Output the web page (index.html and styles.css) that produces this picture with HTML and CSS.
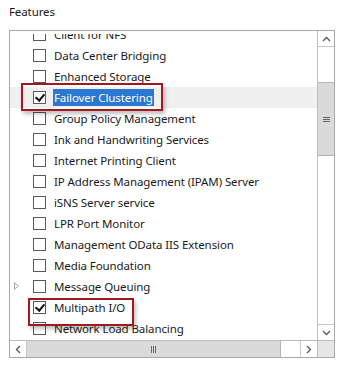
FILE: index.html
```html
<!DOCTYPE html>
<html lang="en">
<head>
  <meta charset="UTF-8">
  <title>Features</title>
  <link rel="stylesheet" href="styles.css">
</head>
<body>
  <div class="panel">
    <div class="panel-title">Features</div>

    <div class="listbox">
      <div class="list-view">
        <div class="viewport">
          <ul class="feature-list">
            <li class="item"><span class="box"></span><span class="label">Client for NFS</span></li>
            <li class="item"><span class="box"></span><span class="label">Data Center Bridging</span></li>
            <li class="item"><span class="box"></span><span class="label">Enhanced Storage</span></li>
            <li class="item current"><span class="box checked"></span><span class="label selected">Failover Clustering</span></li>
            <li class="item"><span class="box"></span><span class="label">Group Policy Management</span></li>
            <li class="item"><span class="box"></span><span class="label">Ink and Handwriting Services</span></li>
            <li class="item"><span class="box"></span><span class="label">Internet Printing Client</span></li>
            <li class="item"><span class="box"></span><span class="label">IP Address Management (IPAM) Server</span></li>
            <li class="item"><span class="box"></span><span class="label">iSNS Server service</span></li>
            <li class="item"><span class="box"></span><span class="label">LPR Port Monitor</span></li>
            <li class="item"><span class="box"></span><span class="label">Management OData IIS Extension</span></li>
            <li class="item"><span class="box"></span><span class="label">Media Foundation</span></li>
            <li class="item"><span class="expander"></span><span class="box"></span><span class="label">Message Queuing</span></li>
            <li class="item"><span class="box checked"></span><span class="label">Multipath I/O</span></li>
            <li class="item"><span class="box"></span><span class="label">Network Load Balancing</span></li>
          </ul>
        </div>

        <!-- annotation boxes drawn over the list -->
        <div class="mark mark-failover"></div>
        <div class="mark mark-multipath"></div>
      </div>

      <div class="vscroll">
        <div class="arrow">
          <svg width="9" height="6" viewBox="0 0 9 6"><path d="M1 5 L4.5 1.5 L8 5" fill="none" stroke="#555" stroke-width="1.3"/></svg>
        </div>
        <div class="track"></div>
        <div class="thumb">
          <span class="grip-h"></span><span class="grip-h"></span><span class="grip-h"></span>
        </div>
        <div class="track grow"></div>
        <div class="arrow">
          <svg width="9" height="6" viewBox="0 0 9 6"><path d="M1 1 L4.5 4.5 L8 1" fill="none" stroke="#555" stroke-width="1.3"/></svg>
        </div>
      </div>

      <div class="hscroll">
        <div class="arrow">
          <svg width="6" height="9" viewBox="0 0 6 9"><path d="M5 1 L1.5 4.5 L5 8" fill="none" stroke="#555" stroke-width="1.3"/></svg>
        </div>
        <div class="thumb">
          <span class="grip-v"></span><span class="grip-v"></span><span class="grip-v"></span>
        </div>
        <div class="track"></div>
        <div class="arrow">
          <svg width="6" height="9" viewBox="0 0 6 9"><path d="M1 1 L4.5 4.5 L1 8" fill="none" stroke="#555" stroke-width="1.3"/></svg>
        </div>
      </div>

      <div class="corner"></div>
    </div>
  </div>
</body>
</html>
```

FILE: styles.css
```css
/* General Styles */
body {
  margin: 0;
  background: #ffffff;
  font-family: 'Noto Sans', 'Open Sans', sans-serif;
  font-size: 11.5px;
  letter-spacing: -0.1px;
  color: #1a1a1a;
}

.panel {
  padding: 4px 16px 10px 9px;
}

.panel-title {
  height: 26px;
  line-height: 16px;
}

/* list box with scroll bars */
.listbox {
  display: grid;
  grid-template-columns: 1fr 17px;
  grid-template-rows: 309px 17px;
  border: 1px solid #a9a9a9;
  width: 324px;
}

.list-view {
  position: relative;
  background: #fff;
  padding-top: 3px;
  overflow: hidden;
}

.viewport {
  height: 306px;
  overflow: hidden;
}

.feature-list {
  list-style: none;
  margin: -10px 0 0 0;
  padding: 0;
}

.item {
  position: relative;
  display: flex;
  align-items: center;
  height: 21px;
  padding-left: 23px;
  white-space: nowrap;
}

.item.current {
  background: #f0f0f0;
}

.box {
  width: 11px;
  height: 11px;
  border: 1px solid #5a5a5a;
  background: #fff;
  margin-right: 7px;
  position: relative;
  flex: none;
}

.box.checked::after {
  content: "";
  position: absolute;
  left: 3px;
  top: 0px;
  width: 4px;
  height: 7px;
  border-right: 2px solid #111;
  border-bottom: 2px solid #111;
  transform: rotate(40deg);
}

.label {
  line-height: 17px;
  padding: 0 1px;
}

.label.selected {
  background: #2b78d3;
  color: #fff;
}

.expander {
  position: absolute;
  left: 4px;
  top: 6px;
  width: 0;
  height: 0;
  border-top: 4px solid transparent;
  border-bottom: 4px solid transparent;
  border-left: 5px solid #a6a6a6;
}

.expander::after {
  content: "";
  position: absolute;
  left: -4px;
  top: -2px;
  border-top: 2px solid transparent;
  border-bottom: 2px solid transparent;
  border-left: 3px solid #fff;
}

/* red annotation frames */
.mark {
  position: absolute;
  border: 2px solid #a3181f;
  box-shadow: 2px 3px 4px rgba(0, 0, 0, 0.25);
}

.mark-failover {
  left: 11px;
  top: 52px;
  width: 138px;
  height: 24px;
}

.mark-multipath {
  left: 18px;
  top: 267px;
  width: 102px;
  height: 24px;
}

/* scroll bars */
.vscroll {
  display: flex;
  flex-direction: column;
  border-left: 1px solid #bdbdbd;
  background: #fff;
}

.vscroll .arrow {
  height: 15px;
  display: flex;
  align-items: center;
  justify-content: center;
}

.vscroll .arrow:first-child {
  border-bottom: 1px solid #c8c8c8;
}

.vscroll .arrow:last-child {
  border-top: 1px solid #c8c8c8;
}

.vscroll .track {
  height: 35px;
}

.vscroll .track.grow {
  flex: 1;
  height: auto;
}

.vscroll .thumb {
  height: 72px;
  background: #dadada;
  border-top: 1px solid #b5b5b5;
  border-bottom: 1px solid #b5b5b5;
  display: flex;
  flex-direction: column;
  align-items: center;
  justify-content: center;
  gap: 1px;
}

.grip-h {
  width: 7px;
  height: 1px;
  background: #666;
}

.hscroll {
  display: flex;
  border-top: 1px solid #bdbdbd;
  background: #fff;
}

.hscroll .arrow {
  width: 16px;
  display: flex;
  align-items: center;
  justify-content: center;
}

.hscroll .arrow:first-child {
  border-right: 1px solid #c8c8c8;
}

.hscroll .arrow:last-child {
  border-left: 1px solid #c8c8c8;
}

.hscroll .thumb {
  width: 253px;
  background: #dadada;
  border-right: 1px solid #b5b5b5;
  display: flex;
  align-items: center;
  justify-content: center;
  gap: 1px;
}

.grip-v {
  width: 1px;
  height: 7px;
  background: #666;
}

.hscroll .track {
  flex: 1;
}

.corner {
  background: #e6e6e6;
  border-top: 1px solid #bdbdbd;
  border-left: 1px solid #bdbdbd;
}
```
